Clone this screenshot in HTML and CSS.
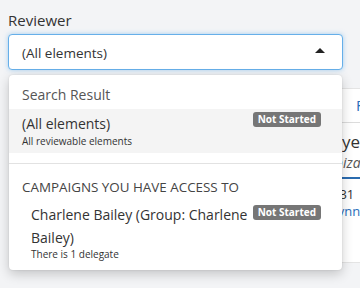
FILE: index.html
```html
<!doctype html>
<html lang="en">
<head>
    <meta charset="UTF-8" />
    <title>Reviewer</title>
    <link rel="stylesheet" href="styles.css">
</head>
<body>
    <div class="page">
        <div class="field">
            <label class="field-label">Reviewer</label>
            <div class="select open">
                <span class="select-value">(All elements)</span>
                <span class="caret"></span>
            </div>

            <div class="menu">
                <div class="menu-header">Search Result</div>
                <div class="menu-item active">
                    <div class="item-main">
                        <div class="item-title">(All elements)</div>
                        <div class="item-sub">All reviewable elements</div>
                    </div>
                    <span class="badge">Not Started</span>
                </div>

                <div class="menu-divider"></div>

                <div class="menu-header caps">Campaigns you have access to</div>
                <div class="menu-item nested">
                    <div class="item-main">
                        <div class="item-title wrap">Charlene Bailey (Group: Charlene Bailey)</div>
                        <div class="item-sub">There is 1 delegate</div>
                    </div>
                    <span class="badge">Not Started</span>
                </div>
            </div>
        </div>

        <div class="card">
            <div class="card-tabs">
                <span class="tab">Fields</span>
            </div>
            <div class="card-body">
                <div class="card-title">Byers</div>
                <div class="card-subtitle">Ibiza</div>
                <div class="card-rule"></div>
                <div class="card-num">#31</div>
                <div class="card-link">Lynn</div>
            </div>
        </div>
    </div>
</body>
</html>
```

FILE: styles.css
```css
* {
    margin: 0;
    padding: 0;
    box-sizing: border-box;
}

html, body {
    height: 100%;
    overflow: hidden;
}

body {
    font-family: "Open Sans", "Liberation Sans", sans-serif;
    background: #f3f4f6;
    color: #333;
}

.page {
    padding: 9px 17px 0 8px;
}

.field {
    position: relative;
    z-index: 2;
}

.field-label {
    display: block;
    font-size: 15px;
    line-height: 22px;
    font-weight: 500;
    color: #333;
    margin-bottom: 3px;
}

.select {
    display: flex;
    align-items: center;
    height: 36px;
    padding: 0 17px 0 13px;
    background: white;
    border: 1px solid #66afe9;
    border-radius: 4px;
    box-shadow: 0 0 5px rgba(102, 175, 233, 0.55);
}

.select-value {
    flex: 1;
    font-size: 13.5px;
    color: #333;
    padding-top: 1px;
}

.caret {
    width: 0;
    height: 0;
    border-left: 5px solid transparent;
    border-right: 5px solid transparent;
    border-bottom: 5px solid #222;
    margin-top: -3px;
}

.menu {
    position: absolute;
    top: calc(100% + 5px);
    left: 1px;
    right: 1px;
    background: white;
    border-radius: 4px;
    box-shadow: 0 4px 12px rgba(0, 0, 0, 0.2), 0 0 2px rgba(0, 0, 0, 0.12);
    padding-bottom: 10px;
}

.menu-header {
    padding: 10px 13px 4px;
    font-size: 14px;
    line-height: 20px;
    color: #555;
}

.menu-header.caps {
    padding-top: 13px;
    text-transform: uppercase;
    font-size: 13.4px;
    color: #444;
}

.menu-item {
    display: flex;
    align-items: flex-start;
    padding: 5px 21px 5px 13px;
}

.menu-item.active {
    background: #f4f4f4;
}

.menu-item.nested {
    padding-left: 22px;
    padding-top: 2px;
    padding-bottom: 0;
}

.item-main {
    flex: 1;
    min-width: 0;
}

.item-title {
    font-size: 14px;
    line-height: 20px;
    color: #333;
}

.item-title.wrap {
    line-height: 23px;
}

.item-sub {
    font-size: 10px;
    line-height: 14px;
    color: #333;
}

.nested .item-sub {
    line-height: 12px;
    margin-top: -1px;
}

.badge {
    flex: none;
    margin-left: 4px;
    margin-top: -2px;
    padding: 0 5px;
    height: 15px;
    line-height: 15px;
    font-size: 10px;
    font-weight: 700;
    color: white;
    background: #767676;
    border-radius: 3px;
}

.nested .badge {
    margin-top: 2px;
}

.menu-divider {
    height: 1px;
    background: #e2e2e2;
    margin-top: 10px;
}

.card {
    margin: 18px 0 0 320px;
    width: 200px;
    height: 175px;
    background: white;
    border: 1px solid #e4e4e4;
    overflow: hidden;
}

.card-tabs {
    height: 34px;
    border-bottom: 1px solid #dcdcdc;
    padding: 5px 0 0 27px;
}

.tab {
    font-size: 15px;
    color: #2a6ebb;
}

.card-body {
    padding: 8px 0 0 2px;
}

.card-title {
    font-size: 17px;
    line-height: 21px;
    color: #333;
}

.card-subtitle {
    font-size: 14px;
    line-height: 20px;
    margin-top: 1px;
    font-style: italic;
    color: #555;
}

.card-rule {
    height: 2px;
    background: #2b6cb0;
    margin: 4px 0 7px;
}

.card-num {
    font-size: 13px;
    line-height: 17px;
    color: #333;
}

.card-link {
    font-size: 13px;
    line-height: 17px;
    color: #2a6ebb;
}
```
